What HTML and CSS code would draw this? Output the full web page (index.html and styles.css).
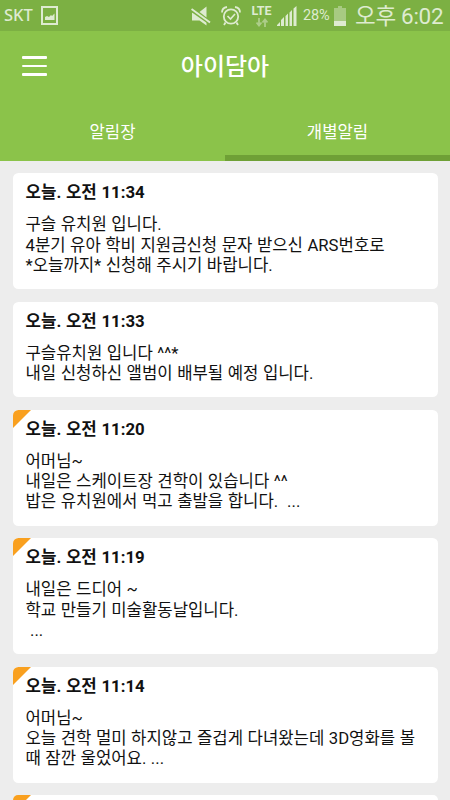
FILE: index.html
```
<!DOCTYPE html>
<html lang="ko">
<head>
  <meta charset="UTF-8">
  <meta name="viewport" content="width=device-width, initial-scale=1">
  <title>아이담아</title>
  <link rel="stylesheet" href="styles.css">
</head>
<body>

  <div class="status">
    <span class="carrier">SKT</span>
    <svg class="ic-photo" width="17" height="19" viewBox="0 0 17 19">
      <path d="M1 1h15v17H1z" fill="none" stroke="currentColor" stroke-width="2"/>
      <path d="M4 14v-3l2-1 2 1 2-2 1 1 2.500-2.500V14z" fill="currentColor"/>
    </svg>
    <div class="right">
      <svg class="ic-mute" width="20" height="20" viewBox="0 0 20 20">
        <path d="M1 6.500h3.500L15.500 16v3.500l-7-5H1zM8.500 6l7-5.500v11z" fill="currentColor"/>
        <path d="M0 4.500L19 18" stroke="#7cb043" stroke-width="2"/>
        <path d="M.5 3L19 16.500" stroke="currentColor" stroke-width="2"/>
      </svg>
      <svg class="ic-alarm" width="20" height="20" viewBox="0 0 20 20" fill="none" stroke="currentColor">
        <circle cx="10" cy="10.500" r="7.200" stroke-width="1.800"/>
        <path d="M6.500 10l3 3 4.500-5" stroke-width="1.700"/>
        <path d="M1 6.500C1 3.500 3 1.500 6 1M19 6.500C19 3.500 17 1.500 14 1M4.500 16.500L3 19M15.500 16.500L17 19" stroke-width="1.800"/>
      </svg>
      <div class="lte">
        <span>LTE</span>
        <svg width="12" height="9" viewBox="0 0 12 9" fill="none" stroke="currentColor" stroke-width="1.800">
          <path d="M3 0v7M.5 4.500L3 7.500l2.500-3M9 9V2M6.500 4.500L9 1.500l2.500 3"/>
        </svg>
      </div>
      <svg class="ic-signal" width="20" height="20" viewBox="0 0 20 20" fill="currentColor">
        <path d="M0 20v-1l3-3v4zM4 20v-6l3-3v9zM8.500 20V10L11 7.500V20zM12.500 20V6.500L15 4v16zM16.500 20V2.500L19.500 0v20z"/>
      </svg>
      <span class="percent">28%</span>
      <svg class="ic-battery" width="12" height="20" viewBox="0 0 12 20" fill="currentColor">
        <path d="M4 0h4v2h4v13H0V2h4z" opacity=".45"/>
        <path d="M0 15h12v5H0z"/>
      </svg>
      <span class="time">오후 6:02</span>
    </div>
  </div>

  <header class="header">
    <div class="bar">
      <div class="menu"><i></i><i></i><i></i></div>
      <h1>아이담아</h1>
    </div>
    <nav class="tabs">
      <a class="tab">알림장</a>
      <a class="tab active">개별알림</a>
    </nav>
  </header>

  <main class="list">
    <div class="card">
      <h2>오늘. 오전 11:34</h2>
      <p>구슬 유치원 입니다.<br>4분기 유아 학비 지원금신청 문자 받으신 ARS번호로<br>*오늘까지* 신청해 주시기 바랍니다.</p>
    </div>
    <div class="card">
      <h2>오늘. 오전 11:33</h2>
      <p>구슬유치원 입니다 ^^*<br>내일 신청하신 앨범이 배부될 예정 입니다.</p>
    </div>
    <div class="card new">
      <h2>오늘. 오전 11:20</h2>
      <p>어머님~<br>내일은 스케이트장 견학이 있습니다 ^^<br>밥은 유치원에서 먹고 출발을 합니다.&nbsp; ...</p>
    </div>
    <div class="card new">
      <h2>오늘. 오전 11:19</h2>
      <p>내일은 드디어 ~<br>학교 만들기 미술활동날입니다.<br>&nbsp;...</p>
    </div>
    <div class="card new">
      <h2>오늘. 오전 11:14</h2>
      <p>어머님~<br>오늘 견학 멀미 하지않고 즐겁게 다녀왔는데 3D영화를 볼<br>때 잠깐 울었어요. ...</p>
    </div>
    <div class="card new last"></div>
  </main>

</body>
</html>
```

FILE: styles.css
```
* {
  box-sizing: border-box;
  margin: 0;
  padding: 0;
}
body {
  height: 800px;
  overflow: hidden;
  background: #ededed;
  color: #111;
  font-family: Roboto, 'Noto Sans CJK KR', sans-serif;
}
.status {
  height: 31px;
  background: #7cb043;
  color: #deebd0;
  display: flex;
  align-items: center;
  padding: 0 7px 0 4px;
}
.status svg {
  display: block;
  flex: none;
}
.carrier {
  font-family: 'Noto Sans', sans-serif;
  font-size: 16.5px;
  font-weight: 500;
  line-height: 28px;
  padding-bottom: 1px;
  width: 37px;
}
.right {
  display: flex;
  align-items: center;
  margin-left: auto;
}
.ic-alarm {
  margin-left: 10px;
}
.lte {
  width: 21px;
  margin-left: 10px;
  display: flex;
  flex-direction: column;
  align-items: center;
  font-size: 12.5px;
  font-weight: 700;
  line-height: 11px;
}
.lte svg {
  margin-top: 2px;
  opacity: 0.5;
}
.ic-signal {
  margin-left: 5px;
}
.percent {
  width: 28px;
  margin-left: 6px;
  font-size: 14.5px;
  letter-spacing: -0.2px;
  line-height: 30px;
}
.ic-battery {
  margin-left: 3px;
}
.time {
  width: 88px;
  margin-left: 9px;
  font-size: 22.5px;
  line-height: 30px;
  letter-spacing: -0.3px;
  white-space: nowrap;
}
.header {
  height: 130px;
  background: #8bc34a;
  color: #fff;
}
.bar {
  height: 70px;
  display: flex;
  align-items: center;
  padding: 0 22px;
}
.menu {
  width: 25px;
  display: flex;
  flex-direction: column;
  gap: 6px;
}
.menu i {
  height: 2.5px;
  border-radius: 1px;
  background: #fff;
}
.bar h1 {
  flex: 1;
  margin-right: 25px;
  padding-top: 1px;
  text-align: center;
  font-size: 24px;
  font-weight: 500;
  line-height: 30px;
}
.tabs {
  height: 60px;
  display: flex;
}
.tab {
  flex: 1;
  padding-top: 3px;
  text-align: center;
  font-size: 16.67px;
  line-height: 58px;
}
.tab.active {
  background: linear-gradient(#6fa036, #6fa036) bottom / 100% 6px no-repeat;
}
.list {
  height: 639px;
  display: flex;
  flex-direction: column;
  gap: 12.5px;
  padding: 12.4px 12.5px 0;
  overflow: hidden;
}
.card {
  flex: none;
  position: relative;
  padding: 8px 13px 13px;
  border-radius: 5.5px;
  background: #fff;
  overflow: hidden;
}
.card h2 {
  font-size: 16.8px;
  font-weight: 700;
  line-height: 22px;
  word-spacing: 0.5px;
}
.card p {
  margin-top: 12px;
  font-size: 16.7px;
  line-height: 20.3px;
  word-spacing: 0.35px;
  white-space: nowrap;
}
/* unread corner */
.new::before {
  content: '';
  position: absolute;
  top: 0;
  left: 0;
  border-top: 18.5px solid #f9a01f;
  border-right: 18.5px solid transparent;
}
/* cut off by the bottom of the screen */
.last {
  flex: 1;
  padding: 0;
  border-radius: 5.5px 5.5px 0 0;
}
```
